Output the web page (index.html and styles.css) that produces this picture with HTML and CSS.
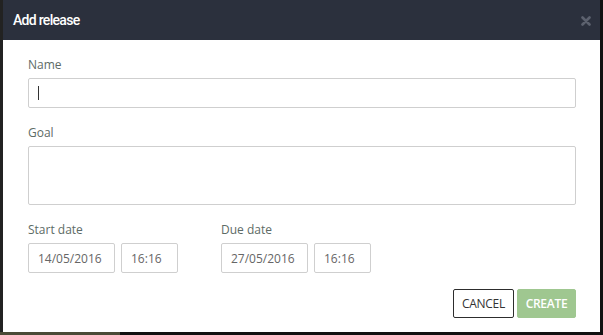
FILE: index.html
```html
<!DOCTYPE html>
<html>
<head>
<meta charset="utf-8">
<link rel="stylesheet" href="styles.css">
</head>
<body>
<div class="modal">
  <div class="modal-header">
    <span class="title">Add release</span>
    <svg class="close" width="10" height="10" viewBox="0 0 10 10"><path d="M1.5 1.5 L8.5 8.5 M8.5 1.5 L1.5 8.5" stroke="#5c616e" stroke-width="2.6" stroke-linecap="round"/></svg>
  </div>
  <div class="modal-body">
    <div class="label">Name</div>
    <div class="field name"><span class="caret"></span></div>
    <div class="label gap">Goal</div>
    <div class="field goal"></div>
    <div class="dates">
      <div class="date-col">
        <div class="label">Start date</div>
        <div class="date-row">
          <div class="field date">14/05/2016</div>
          <div class="field time">16:16</div>
        </div>
      </div>
      <div class="date-col">
        <div class="label">Due date</div>
        <div class="date-row">
          <div class="field date">27/05/2016</div>
          <div class="field time">16:16</div>
        </div>
      </div>
    </div>
    <div class="actions">
      <button class="btn cancel">CANCEL</button>
      <button class="btn create">CREATE</button>
    </div>
  </div>
</div>
</body>
</html>
```
FILE: styles.css
```css
html, body {
  margin: 0;
  padding: 0;
}
body {
  background: linear-gradient(to right, #4a4a36 0, #4a4a36 120px, #111 120px);
  width: 603px;
  height: 335px;
  overflow: hidden;
  font-family: "Open Sans", "Liberation Sans", sans-serif;
}
.modal {
  margin-left: 3px;
  width: 597px;
  height: 332px;
  background: #fff;
  box-shadow: -3px 0 0 #222;
}
.modal-header {
  height: 40px;
  background: #2b303d;
  display: flex;
  align-items: center;
  justify-content: space-between;
  padding: 0 9px 0 10px;
  box-sizing: border-box;
}
.title {
  color: #fff;
  font-family: Roboto, "Liberation Sans", sans-serif;
  font-weight: 500;
  font-size: 14px;
  letter-spacing: -0.7px;
  margin-top: -1px;
}
.close {
  display: block;
  margin-top: 1px;
}
.modal-body {
  padding: 16px 24px 0 25px;
}
.label {
  font-size: 12px;
  line-height: 17px;
  color: #5d6b66;
  margin-bottom: 5px;
}
.label.gap {
  margin-top: 16px;
}
.field {
  box-sizing: border-box;
  border: 1px solid #cfcfcf;
  border-radius: 2px;
  background: #fff;
  font-size: 12px;
  color: #666;
  display: flex;
  align-items: center;
  padding-left: 9px;
}
.name {
  height: 30px;
}
.caret {
  display: inline-block;
  width: 1px;
  height: 14px;
  background: #333;
}
.goal {
  height: 59px;
}
.dates {
  display: flex;
  margin-top: 16px;
}
.date-col {
  width: 193px;
}
.date-row {
  display: flex;
  gap: 6px;
}
.date {
  width: 87px;
  height: 30px;
}
.time {
  width: 57px;
  height: 30px;
}
.actions {
  display: flex;
  justify-content: flex-end;
  gap: 3px;
  margin-top: 16px;
}
.btn {
  height: 29px;
  font-family: "Open Sans", "Liberation Sans", sans-serif;
  font-size: 12px;
  border-radius: 2px;
  padding: 0;
  letter-spacing: -0.3px;
}
.cancel {
  width: 61px;
  background: #fff;
  border: 1px solid #2d2d2d;
  color: #333;
}
.create {
  width: 59px;
  background: #9fc790;
  border: 1px solid #9fc790;
  color: #fff;
  font-weight: 600;
}
```
